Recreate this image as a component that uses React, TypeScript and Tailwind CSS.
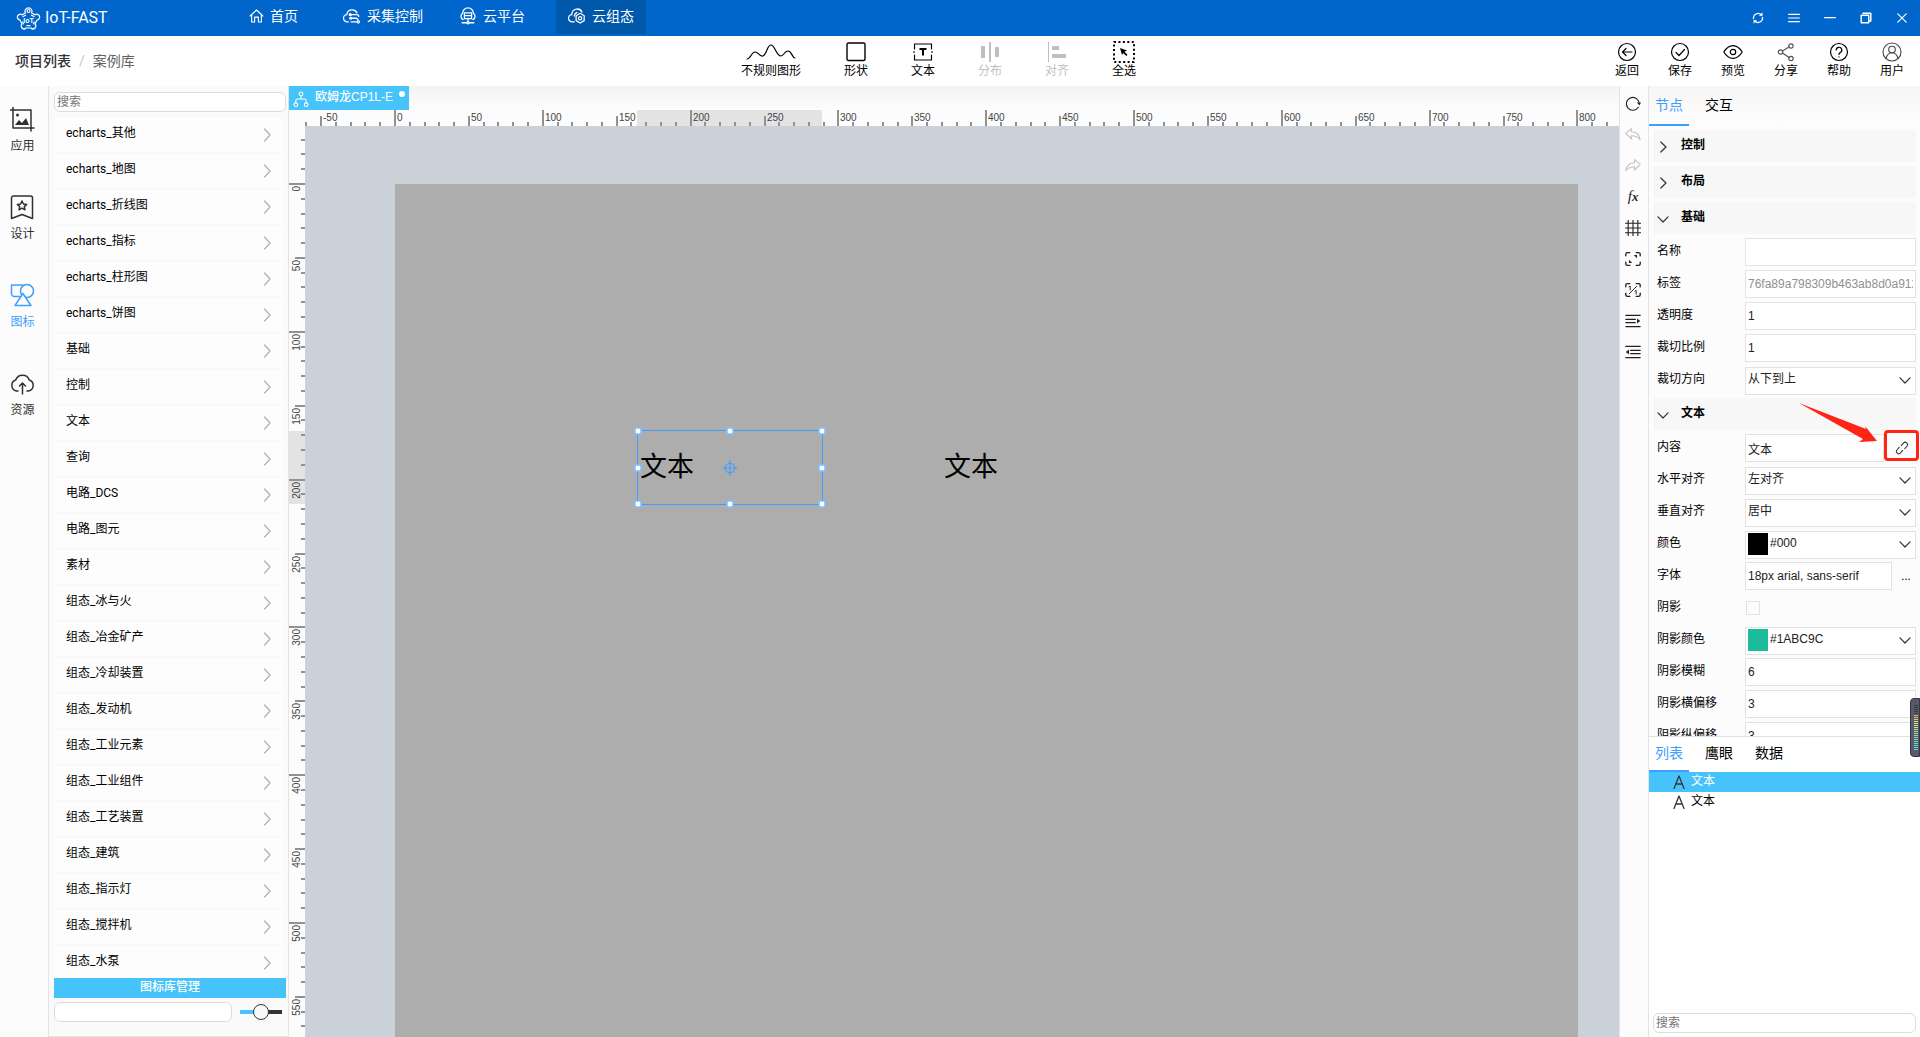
import React from "react";

const latin = "font-['Roboto','Noto_Sans_CJK_SC',sans-serif]";
const arial = "font-['Liberation_Sans','Noto_Sans_CJK_SC',sans-serif]";

type IconProps = { className?: string; w?: number; h?: number; box?: string; sw?: number; children: React.ReactNode };
function Svg({ className = "", w = 20, h = 20, box = "0 0 20 20", sw = 1.2, children }: IconProps) {
  return (
    <svg aria-hidden="true" width={w} height={h} viewBox={box} fill="none" stroke="currentColor" strokeWidth={sw} strokeLinecap="round" strokeLinejoin="round" className={"shrink-0 " + className}>
      {children}
    </svg>
  );
}

function Logo() {
  return (
    <Svg w={25} h={25} box="0 0 25 25" sw={1.2}>
      <path d="M9.400 7A3.500 3.500 0 1 1 15.600 7L19 8.800A2.900 2.900 0 1 1 21 14L19 18a2.600 2.600 0 1 1-4 4h-5a2.600 2.600 0 1 1-4-4L4 14A2.900 2.900 0 1 1 6 8.800z" />
      <circle cx="12.500" cy="5" r="1.500" />
      <path d="M9.500 9.200 7 10.600M15.500 9.200l2.500 1.400M18.300 16l-.8 1.800M14 19.700h-3M7.500 17.800 6.700 16" />
      <text x="12.500" y="16.500" textAnchor="middle" fontSize="7" fill="currentColor" stroke="none" fontWeight="bold" fontFamily="Liberation Sans">IoT</text>
    </Svg>
  );
}

function NavItem({ icon, label, active }: { icon: React.ReactNode; label: string; active?: boolean }) {
  return (
    <a href="#" className={"flex h-[34px] items-center gap-1.5 px-3 pb-0.5 text-[14px] whitespace-nowrap " + (active ? "bg-[#0058ab]" : "")}>
      {icon}
      {label}
    </a>
  );
}

function Header() {
  return (
    <header className="flex h-9 shrink-0 items-start bg-[#0066cc] text-white">
      <div className="flex h-9 w-[237px] items-center gap-1 pl-4 text-[16px]">
        <Logo />
        IoT-FAST
      </div>
      <nav className="flex">
        <div className="w-[94px]">
          <NavItem label="首页" icon={<Svg w={15} h={16}><path d="M1.500 10 10 2l8.500 8M3.500 8.500V18h4v-6.500h5V18h4V8.500" strokeWidth="1.500" /></Svg>} />
        </div>
        <div className="w-[116px]">
          <NavItem label="采集控制" icon={<Svg w={18} h={18} sw={1.4}><path d="M6 16.500H5a4 4 0 0 1-.8-8A6 6 0 0 1 15.500 6.500M9 8.500h5M15 8.500q2.500 0 2.500 2M9.500 12.500h5q2 0 2 1.500M9 16.500h6" /><circle cx="8" cy="8.500" r="1" /><circle cx="17" cy="16.500" r="1.300" /><circle cx="8.500" cy="12.500" r="1" /></Svg>} />
        </div>
        <div className="w-[109px]">
          <NavItem label="云平台" icon={<Svg w={18} h={18} sw={1.4}><path d="M4.500 14A4 4 0 0 1 4 7a6 6 0 0 1 12 0 4 4 0 0 1-.5 7M6 6.500h8V13H6zM6 9.700h8M10 13v3M3.500 17.500h5M11.500 17.500h5" /><circle cx="10" cy="17.500" r="1.300" /></Svg>} />
        </div>
        <NavItem active label="云组态" icon={<Svg w={18} h={18} sw={1.4}><path d="M7 16.500H5a4 4 0 0 1-.8-8A6 6 0 0 1 15.500 5.500M7 10a5 5 0 0 1 3-4" /><path d="m13.500 7 4.500 2.700v5.400l-4.500 2.700L9 15.100V9.700z" /><circle cx="13.500" cy="12.400" r="1.800" /></Svg>} />
      </nav>
      <div className="ml-auto flex h-9 items-center gap-6 pr-3">
        <button aria-label="刷新"><Svg w={12} h={12} sw={2}><path d="M2.500 11a7.500 7.500 0 0 1 13-6M17.500 9a7.500 7.500 0 0 1-13 6" /><path d="M13 6h4V2zM7 14H3v4z" fill="currentColor" strokeWidth="1" /></Svg></button>
        <button aria-label="菜单"><Svg w={12} h={12} sw={2}><path d="M1 4h18M1 10h18M1 16h18" /></Svg></button>
        <button aria-label="最小化"><Svg w={12} h={12} sw={2}><path d="M1 9.500h18" /></Svg></button>
        <button aria-label="还原"><Svg w={12} h={12} sw={2.4}><path d="M2 5.500h12.500V18H2zM5 2h13v13h-3" /></Svg></button>
        <button aria-label="关闭"><Svg w={12} h={12} sw={2}><path d="m3 3 14 14M17 3 3 17" /></Svg></button>
      </div>
    </header>
  );
}

function Tool({ label, children, muted }: { label: string; children: React.ReactNode; muted?: boolean }) {
  return (
    <button disabled={muted} className={"flex flex-col items-center text-[12px] leading-4 whitespace-nowrap " + (muted ? "text-[#bfbfbf]" : "text-black")}>
      <span className="flex h-[23px] items-center">{children}</span>
      {label}
    </button>
  );
}

function Toolbar() {
  return (
    <div className="grid h-[50px] shrink-0 grid-cols-[741px_1fr_auto] bg-white">
      <div className="flex items-center pl-[15px] text-[14px]">
        <a href="#" className="font-medium text-[#303133]">项目列表</a>
        <span className="mx-2 text-[#c0c4cc]">/</span>
        <span className="text-[#606266]">案例库</span>
      </div>
      <div className="flex gap-[43px] pt-1">
        <Tool label="不规则图形"><Svg w={50} h={20} box="0 0 50 20"><path d="M1 17c4 0 4-7 8-7s4 5 8 4C21 12 21 3 25 3s5 11 10 11c3 0 3-5 7-5 4 0 4 7 7 7" /></Svg></Tool>
        <Tool label="形状"><Svg sw={1.4}><rect x="1" y="1" width="18" height="17.500" rx="1.500" /></Svg></Tool>
        <Tool label="文本"><Svg><path d="M1.500 7V2h17v5M1.500 13v5h17v-5M1 9.500v1M19 9.500v1" /><path d="M6.500 7h7M10 7v6.500" strokeWidth="2" strokeLinecap="butt" /></Svg></Tool>
        <Tool muted label="分布"><Svg sw={0}><path d="M1 4h4v12H1zM9 0h2v20H9zM15 5h4v10h-4z" fill="currentColor" /></Svg></Tool>
        <Tool muted label="对齐"><Svg sw={0}><path d="M1 0h1v20H1zM5 4h7v4H5zM5 12h14v4H5z" fill="currentColor" /></Svg></Tool>
        <Tool label="全选"><Svg w={22} h={22} box="0 0 22 22" sw={2}><rect x="1" y="1" width="20" height="20" strokeDasharray="2 2.440" strokeLinecap="butt" /><path d="m7 7 7 2.500-2.500 1.200 3 3-1.200 1.200-3-3L9 14z" fill="currentColor" stroke="none" /></Svg></Tool>
      </div>
      <div className="flex gap-[29px] pt-1 pr-4">
        <Tool label="返回"><Svg><circle cx="10" cy="10" r="8.500" /><path d="M15 10H5.500M9 6.500 5.500 10 9 13.500" /></Svg></Tool>
        <Tool label="保存"><Svg><circle cx="10" cy="10" r="8.500" /><path d="m6 10.500 3 3 5.500-6" /></Svg></Tool>
        <Tool label="预览"><Svg><path d="M.8 10C6 1.500 14 1.500 19.200 10 14 18.500 6 18.500.8 10z" /><circle cx="10" cy="10" r="2.700" /></Svg></Tool>
        <Tool label="分享"><Svg className="text-[#555]"><circle cx="4.500" cy="10" r="2.200" /><circle cx="15" cy="4" r="2.200" /><circle cx="15" cy="16.500" r="2.200" /><path d="m6.500 9 6.500-4M6.500 11l6.500 4.500" /></Svg></Tool>
        <Tool label="帮助"><Svg><circle cx="10" cy="10" r="8.500" /><path d="M7.200 8a2.800 2.800 0 1 1 4 2.600c-.8.400-1.200.9-1.200 1.900M10 14.800v.2" /></Svg></Tool>
        <Tool label="用户"><Svg sw={1.1} className="text-[#444]"><circle cx="10" cy="10" r="9" /><circle cx="10" cy="7.500" r="3.300" /><path d="M4 16.500c.8-3 3-5.700 6-5.700s5.200 2.700 6 5.700" /></Svg></Tool>
      </div>
    </div>
  );
}

function LeftRail() {
  const items: [string, React.ReactNode][] = [
    ["应用", <><path d="M3 0v21h21M0 3h21v21" /><circle cx="7.500" cy="8" r="1.500" fill="currentColor" stroke="none" /><path d="m5 18 4-5 3 3 4-5 3 7z" fill="currentColor" stroke="none" /></>],
    ["设计", <><path d="M1.500 3a2 2 0 0 1 2-2h17a2 2 0 0 1 2 2v20.500l-10.500-4-10.500 4z" /><path d="m12 6 1.400 3 3.300.4-2.400 2.200.7 3.200-3-1.600-3 1.600.7-3.200-2.400-2.200 3.300-.4z" /></>],
    ["图标", <><path d="M11 13.500H4.500A3 3 0 0 1 1.500 11V2H13" /><circle cx="17" cy="8" r="6.500" /><path d="M13 10.500 5 22.500h16z" className="fill-[#fcfcfc]" /></>],
    ["资源", <><path d="M8 20H6.500a5.700 5.700 0 0 1-.8-11 7.200 7.200 0 0 1 13.600 0 5.700 5.700 0 0 1-.8 11H17M12.500 23V12M9.500 15l3-3 3 3" /></>],
  ];
  return (
    <nav className="flex w-[49px] shrink-0 flex-col gap-11 border-r border-[#e4e4e4] bg-[#fcfcfc] pt-[21px]">
      {items.map(([label, icon], i) => (
        <a key={label} href="#" className={"flex h-11 w-[45px] flex-col items-center gap-1.5 text-[12px] leading-4 " + (i === 2 ? "text-[#409eff]" : "text-[#303133]")}>
          <Svg w={25} h={25} box="0 0 25 25" sw={1.5}>{icon}</Svg>
          {label}
        </a>
      ))}
    </nav>
  );
}

const groups = ["echarts_其他", "echarts_地图", "echarts_折线图", "echarts_指标", "echarts_柱形图", "echarts_饼图", "基础", "控制", "文本", "查询", "电路_DCS", "电路_图元", "素材", "组态_冰与火", "组态_冶金矿产", "组态_冷却装置", "组态_发动机", "组态_工业元素", "组态_工业组件", "组态_工艺装置", "组态_建筑", "组态_指示灯", "组态_搅拌机", "组态_水泵"];

function Library() {
  return (
    <aside className="flex w-60 shrink-0 flex-col border-r border-b border-[#e4e4e4] bg-[#fafafa] pt-1.5 pr-0.5 pl-[5px]">
      <input aria-label="搜索" placeholder="搜索" className="h-5 w-full shrink-0 rounded-md border border-[#dcdcdc] bg-white px-0.5 text-[12px] placeholder:text-[#757575]" />
      <ul className="mt-1.5 min-h-0 flex-1 overflow-hidden">
        {groups.map((g) => (
          <li key={g} className="h-9">
            <button className="flex h-[34px] w-[229px] items-center justify-between bg-[#fdfdfd] pr-3 pb-1 pl-3 text-left text-[12px] text-black">
              {g}
              <Svg w={7} h={14} box="0 0 7 14" className="mt-1 text-[#b0b0b0]"><path d="m.6 1 5.400 6-5.400 6" /></Svg>
            </button>
          </li>
        ))}
      </ul>
      <button className="h-5 shrink-0 bg-[#46c3fb] pb-0.5 text-[12px] leading-4 font-medium text-white">图标库管理</button>
      <div className="mt-1 mb-3.5 flex shrink-0 items-center">
        <input aria-label="名称" className="h-5 w-[178px] rounded-md border border-[#dcdcdc] bg-white px-1 text-[12px]" />
        <input
          type="range"
          aria-label="缩放"
          defaultValue={50}
          className="ml-2 h-4 w-[42px] appearance-none bg-[linear-gradient(to_right,#46c3fb_50%,#333_50%)] bg-[length:100%_4px] bg-center bg-no-repeat [&::-webkit-slider-thumb]:size-4 [&::-webkit-slider-thumb]:appearance-none [&::-webkit-slider-thumb]:rounded-full [&::-webkit-slider-thumb]:border [&::-webkit-slider-thumb]:border-[#333] [&::-webkit-slider-thumb]:bg-[#f8f8f8]"
        />
      </div>
    </aside>
  );
}

const UNIT = 1.478;

function Ruler({ vertical, origin, from, to, selStart, selEnd }: { vertical?: boolean; origin: number; from: number; to: number; selStart: number; selEnd: number }) {
  const marks: number[] = [];
  for (let v = from; v <= to; v += 10) marks.push(v);
  return (
    <svg aria-hidden="true" className={vertical ? "h-full w-4 shrink-0 bg-[#fcfcfc]" : "h-4 w-full shrink-0 bg-[#fcfcfc]"}>
      {vertical ? <rect x="0" y={selStart} width="16" height={selEnd - selStart} fill="#e3e3e3" /> : <rect x={selStart} y="0" width={selEnd - selStart} height="16" fill="#e3e3e3" />}
      {marks.map((v) => {
        const p = Math.round(origin + v * UNIT);
        const len = v % 100 === 0 ? 16 : v % 50 === 0 ? 10 : 4;
        return (
          <g key={v}>
            {vertical ? <rect x={16 - len} y={p} width={len} height="2" fill="#929292" /> : <rect x={p} y={16 - len} width="2" height={len} fill="#929292" />}
            {v % 50 === 0 && (
              <text fontFamily="Liberation Sans" fontSize="10" fill="#444" textAnchor={vertical ? "end" : "start"} transform={vertical ? `translate(11 ${p + 3}) rotate(-90)` : `translate(${p + 3} 11)`}>
                {v}
              </text>
            )}
          </g>
        );
      })}
    </svg>
  );
}

function Canvas() {
  const handles = ["left-0 top-0", "left-1/2 top-0", "left-full top-0", "left-0 top-1/2", "left-full top-1/2", "left-0 top-full", "left-1/2 top-full", "left-full top-full"];
  return (
    <main className="flex min-w-0 flex-1 flex-col bg-[#fcfcfc]">
      <div className="h-6 shrink-0 bg-linear-to-b from-[#f3f3f3] to-[#fdfdfd]">
        <button className="flex h-6 w-[120px] items-start gap-1.5 bg-[#46c3fb] pt-[3px] pl-1 text-[12px] leading-4 font-medium text-white">
          <Svg w={16} h={17} sw={1.3} className="mt-0.5"><circle cx="10" cy="3" r="2.300" /><circle cx="3.500" cy="16.500" r="2.300" /><circle cx="16.500" cy="16.500" r="2.300" /><path d="M10 5.500v4M3.500 14v-2q0-2.500 2.500-2.500h8q2.500 0 2.500 2.500v2" /></Svg>
          <span className={arial}>欧姆龙CP1L-E</span>
          <span className="mt-0.5 size-1.5 rounded-full bg-white" />
        </button>
      </div>
      <div className="pl-4"><Ruler origin={89} from={-60} to={820} selStart={332} selEnd={517} /></div>
      <div className="flex min-h-0 flex-1">
        <Ruler vertical origin={57} from={-30} to={570} selStart={305} selEnd={378} />
        <div className="min-w-0 flex-1 overflow-hidden bg-[#cad1d9] pt-[58px] pr-[41px] pl-[90px]">
          <div className="relative h-full bg-[#adadad]">
            <div className="absolute top-[246px] left-[242px] flex h-[75px] w-[186px] items-center border border-[#409eff] pl-0.5 text-[27px]">
              文本
              {handles.map((h) => <i key={h} className={"absolute size-[7px] -translate-1/2 border border-[#409eff] bg-white " + h} />)}
              <Svg w={16} h={16} sw={1.4} className="absolute top-1/2 left-1/2 -translate-1/2 text-[#409eff]"><circle cx="10" cy="10" r="6" /><path d="M10 1v18M1 10h18" /></Svg>
            </div>
            <div className="absolute top-[246px] left-[549px] flex h-[75px] items-center text-[27px]">文本</div>
          </div>
        </div>
      </div>
    </main>
  );
}

function CanvasTools() {
  const corners = <path d="M1 6V4q0-2 2-2h3M14 2h3q2 0 2 2v2M19 14v2q0 2-2 2h-3M6 18H3q-2 0-2-2v-2" strokeWidth="1.700" />;
  const tools: [string, React.ReactNode, boolean?][] = [
    ["刷新", <><path d="M16.500 14A8 8 0 1 1 17.500 8" /><path d="m15 8 5 0-2 4z" fill="currentColor" stroke="none" /></>],
    ["撤销", <path d="M1 8 8 2v4c7 0 10 4 11 10-3-4-6-5-11-5v4z" />, true],
    ["重做", <path d="m19 8-7-6v4C5 6 2 10 1 16c3-4 6-5 11-5v4z" />, true],
    ["函数", <text x="10" y="15" textAnchor="middle" fill="currentColor" stroke="none" fontSize="19" fontStyle="italic" fontFamily="Liberation Serif"><tspan>f</tspan><tspan fontWeight="bold" fontSize="16">x</tspan></text>],
    ["网格", <path d="M4 0v20M10 0v20M16 0v20M0 4h20M0 10h20M0 16h20" strokeLinecap="butt" />],
    ["适应窗口", <>{corners}<path d="M11 5h4v4zM5 11v4h4z" fill="currentColor" stroke="none" /></>],
    ["原始大小", <>{corners}<path d="M14.500 5.500l-9 9M5 6l1.500-1v5M12.500 11.500 14 10.500V15" strokeWidth="1.200" /></>],
    ["右缩进", <><path d="M1 3h18M1 8h12M1 12h12M1 17h18" /><path d="m15 7 4 3-4 3z" fill="currentColor" stroke="none" /></>],
    ["左缩进", <><path d="M1 3h18M7 8h12M7 12h12M1 17h18" /><path d="m5 7-4 3 4 3z" fill="currentColor" stroke="none" /></>],
  ];
  return (
    <div className="flex w-[30px] shrink-0 flex-col items-center gap-[15px] border-x border-[#e4e4e4] bg-[#fcfcfc] pt-2.5 pr-0.5">
      {tools.map(([label, icon, muted]) => (
        <button key={label} aria-label={label} className={muted ? "text-[#c4c4c4]" : "text-[#222]"}><Svg w={16} h={16} sw={1.4}>{icon}</Svg></button>
      ))}
    </div>
  );
}

const chevDown = <Svg w={12} h={7} box="0 0 12 7" className="text-[#333]"><path d="m1 .8 5 5.200 5-5.200" /></Svg>;

function Section({ title, open }: { title: string; open?: boolean }) {
  return (
    <button className="flex h-8 w-full shrink-0 items-center gap-3 bg-[#f7f7f7] pl-1 text-[12px] font-bold text-black">
      <span className="flex w-3 justify-center pt-0.5">{open ? chevDown : <Svg w={7} h={12} box="0 0 7 12" className="text-[#333]"><path d="m.8 1 5.200 5-5.200 5" /></Svg>}</span>
      <span className="pb-0.5">{title}</span>
    </button>
  );
}

const field = "h-7 w-full rounded-none border border-[#e2e2e2] bg-white px-0.5 text-[12px] " + arial;

function Row({ label, id, children }: { label: string; id: string; children: React.ReactNode }) {
  return (
    <div className="flex h-7 shrink-0 items-center">
      <label htmlFor={id} className="w-[92px] shrink-0 pb-0.5 pl-1 text-[12px] text-black">{label}</label>
      <div className="flex min-w-0 flex-1 items-center">{children}</div>
    </div>
  );
}

function Text({ label, id, value, disabled }: { label: string; id: string; value: string; disabled?: boolean }) {
  return <Row label={label} id={id}><input id={id} defaultValue={value} disabled={disabled} className={field + (disabled ? " text-[#909090]" : " text-[#222]")} /></Row>;
}

function Select({ label, id, value, swatch }: { label: string; id: string; value: string; swatch?: string }) {
  return (
    <Row label={label} id={id}>
      <div className="relative w-full">
        <select id={id} className={field + " appearance-none pb-1 text-[#222] " + (swatch ? "pl-6" : "")}><option>{value}</option></select>
        {swatch && <span className={"absolute top-[3px] left-[3px] h-[22px] w-5 " + swatch} />}
        <span className="pointer-events-none absolute top-[11px] right-[5px]">{chevDown}</span>
      </div>
    </Row>
  );
}

function Tabs({ names, tall }: { names: string[]; tall?: boolean }) {
  return (
    <div role="tablist" className={"flex shrink-0 bg-linear-to-b text-[14px] " + (tall ? "h-10 from-[#f6f6f6] to-[#fdfdfd]" : "h-[35px] from-white to-white")}>
      {names.map((n, i) => (
        <button role="tab" aria-selected={i === 0} key={n} className={"flex items-center " + (i === 0 ? "w-10 border-b-2 border-[#409eff] pl-1.5 text-[#409eff]" : "w-[50px] pb-0.5 pl-4 text-black")}>
          <span className="whitespace-nowrap">{n}</span>
        </button>
      ))}
    </div>
  );
}

function Properties() {
  return (
    <aside className="flex w-[271px] shrink-0 flex-col bg-[#fcfcfc]">
      <Tabs tall names={["节点", "交互"]} />
      <div className="flex h-[611px] shrink-0 flex-col gap-1 overflow-hidden border-b border-[#e0e0e0] px-1 pt-1">
        <Section title="控制" />
        <Section title="布局" />
        <Section open title="基础" />
        <Text id="name" label="名称" value="" />
        <Text id="tag" label="标签" value="76fa89a798309b463ab8d0a912" disabled />
        <Text id="opacity" label="透明度" value="1" />
        <Text id="clip" label="裁切比例" value="1" />
        <Select id="clipdir" label="裁切方向" value="从下到上" />
        <Section open title="文本" />
        <Row id="content" label="内容">
          <input id="content" defaultValue="文本" className={field + " text-[#222]"} />
          <div className="relative w-8 shrink-0">
            <button aria-label="绑定数据" className="-mt-1.5 flex h-[31px] w-[35px] items-center justify-center rounded-sm border-[3px] border-[#ff2413] pt-1.5 text-[#333]">
              <Svg w={14} h={14} sw={1.5}><path d="m9 6.500 3-3.500a3.300 3.300 0 0 1 5 4.500L14 11M11 13.500 8 17a3.300 3.300 0 0 1-5-4.500L6 9" /></Svg>
            </button>
            <svg aria-hidden="true" width="80" height="44" viewBox="0 0 80 44" className="absolute right-[38px] bottom-[15px]"><path d="M1 1 68 27l-1-3 12 15-18 1 4-3z" fill="#ff2413" /></svg>
          </div>
        </Row>
        <Select id="halign" label="水平对齐" value="左对齐" />
        <Select id="valign" label="垂直对齐" value="居中" />
        <Select id="color" label="颜色" value="#000" swatch="bg-black" />
        <Row id="font" label="字体">
          <input id="font" defaultValue="18px arial, sans-serif" className={field + " text-[#222]"} />
          <button aria-label="更多" className="w-6 shrink-0 pl-1 text-[12px]">...</button>
        </Row>
        <Row id="shadow" label="阴影"><input id="shadow" type="checkbox" className="ml-px size-3.5 appearance-none border border-[#e2e2e2] bg-[#fcfcfc]" /></Row>
        <Select id="shadowcolor" label="阴影颜色" value="#1ABC9C" swatch="bg-[#1abc9c]" />
        <Text id="blur" label="阴影模糊" value="6" />
        <Text id="dx" label="阴影横偏移" value="3" />
        <Text id="dy" label="阴影纵偏移" value="3" />
      </div>
      <Tabs names={["列表", "鹰眼", "数据"]} />
      <ul className="min-h-0 flex-1 bg-white text-[12px]">
        {[true, false].map((selected, i) => (
          <li key={i} className={"flex h-5 items-center gap-1.5 pl-6 " + (selected ? "bg-[#46c3fb] text-white" : "text-black")}>
            <Svg w={12} h={14} box="0 0 12 14" className="text-[#333]" sw={1.3}><path d="M1 13.500 6 1l5 12.500M3 9h6" /></Svg>
            <span className="pb-0.5">文本</span>
          </li>
        ))}
      </ul>
      <div className="bg-white px-1 pb-1"><input aria-label="搜索节点" placeholder="搜索" className="block h-5 w-full rounded-md border border-[#dcdcdc] bg-white px-0.5 text-[12px] placeholder:text-[#757575]" /></div>
    </aside>
  );
}

function Meter() {
  const colors = ["bg-[#333745]", "bg-[#333745]", "bg-[#333745]", "bg-[#333745]", "bg-[#333745]", "bg-[#f3a66b]", "bg-[#f0b36b]", "bg-[#efc96b]", "bg-[#eddb73]", "bg-[#e8e27a]", "bg-[#dce57f]", "bg-[#cbe584]", "bg-[#bce48a]", "bg-[#ade394]", "bg-[#9ee19d]", "bg-[#91dfa8]", "bg-[#85ddb4]", "bg-[#7cdcc2]", "bg-[#73dacd]", "bg-[#6cd8d5]", "bg-[#68d6dc]", "bg-[#64d4e0]", "bg-[#60d2e4]"];
  return (
    <div className="absolute top-[698px] right-0 flex h-[59px] w-2.5 flex-col gap-px rounded-l-sm border border-[#33363f] bg-[#565b6b] pt-1.5 pl-[3px]">
      {colors.map((c, i) => <i key={i} className={"h-px w-1 shrink-0 " + c} />)}
    </div>
  );
}

export default function App() {
  return (
    <div className={"relative flex h-screen flex-col overflow-hidden " + latin}>
      <Header />
      <Toolbar />
      <div className="flex min-h-0 flex-1">
        <LeftRail />
        <Library />
        <Canvas />
        <CanvasTools />
        <Properties />
      </div>
      <Meter />
    </div>
  );
}
